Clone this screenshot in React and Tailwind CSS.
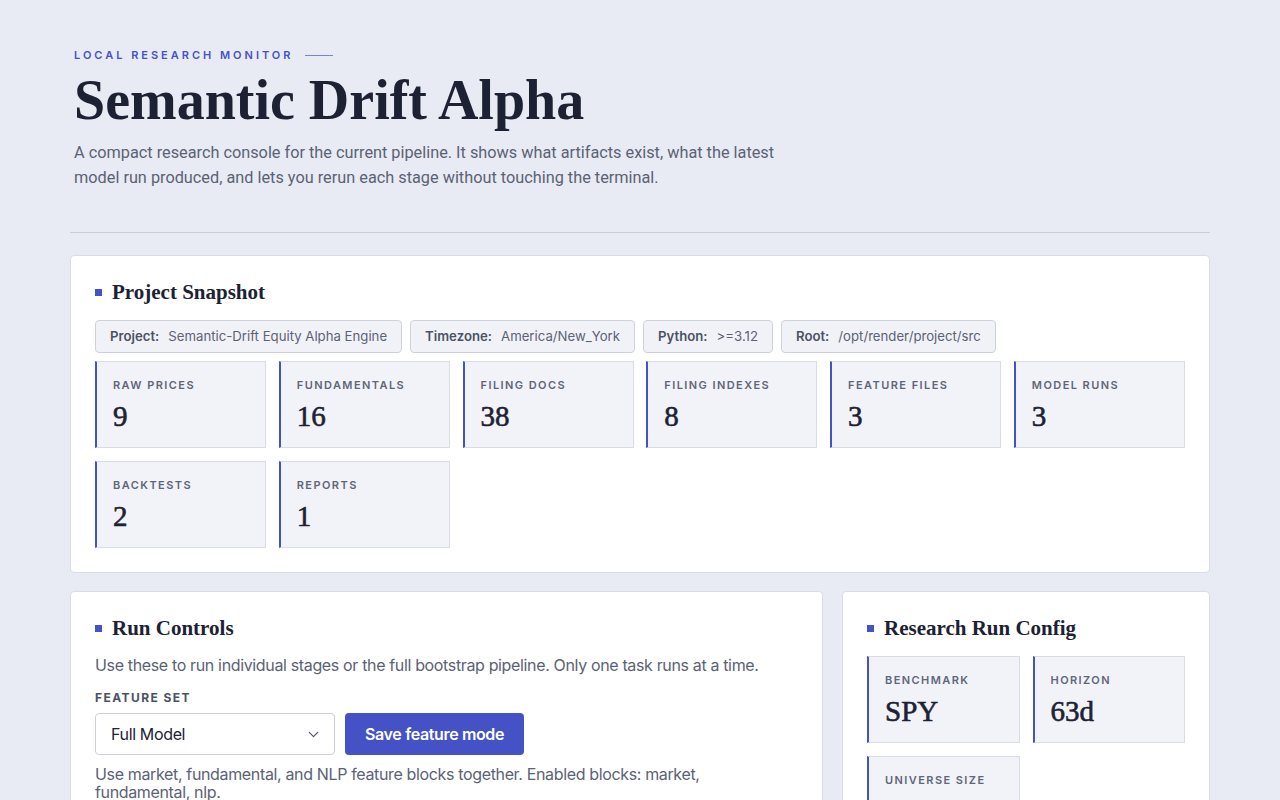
import React from 'react'
import { ChevronDown } from 'lucide-react'

const serif = "font-['Liberation_Serif',Georgia,serif]"

const facts = [
  { k: 'Project', v: 'Semantic-Drift Equity Alpha Engine' },
  { k: 'Timezone', v: 'America/New_York' },
  { k: 'Python', v: '>=3.12' },
  { k: 'Root', v: '/opt/render/project/src' },
]

const counts = [
  { label: 'Raw Prices', value: '9' },
  { label: 'Fundamentals', value: '16' },
  { label: 'Filing Docs', value: '38' },
  { label: 'Filing Indexes', value: '8' },
  { label: 'Feature Files', value: '3' },
  { label: 'Model Runs', value: '3' },
  { label: 'Backtests', value: '2' },
  { label: 'Reports', value: '1' },
]

const config = [
  { label: 'Benchmark', value: 'SPY' },
  { label: 'Horizon', value: '63d' },
  { label: 'Universe Size', value: '50' },
]

const SectionTitle = ({ children }) => (
  <h2 className={`flex items-center gap-[10px] text-[21px] leading-6 font-bold text-[#1c2233] ${serif}`}>
    <span className="w-[7px] h-[7px] bg-[#4552c6]" />
    {children}
  </h2>
)

const Stat = ({ label, value }) => (
  <div className="h-[87px] bg-[#f2f3f8] border border-[#d9dce5] border-l-2 border-l-[#4552c6] pl-4 pt-[15px]">
    <div className="text-[11px] leading-4 font-semibold uppercase tracking-[0.13em] text-[#5f6678]">{label}</div>
    <div className={`mt-[5px] text-[29px] leading-9 text-[#1c2233] [-webkit-text-stroke:0.6px_#1c2233] ${serif}`}>{value}</div>
  </div>
)

const App = () => {
  return (
    <div className="min-h-screen bg-[#e8ebf3] font-['Inter','Liberation_Sans',sans-serif]">
      <div className="max-w-[1140px] mx-auto pt-[47px] pb-16">
        <header className="px-1 pb-[42px] border-b border-[#c8ccd6]">
          <div className="flex items-center gap-3 text-[11px] leading-4 font-semibold tracking-[0.272em] uppercase text-[#4552c6]">
            LOCAL RESEARCH MONITOR
            <span className="w-7 h-px bg-[#7a84d6]" />
          </div>
          <h1 className={`mt-[5px] text-[56px] leading-[64px] font-bold text-[#1c2233] ${serif}`}>Semantic Drift Alpha</h1>
          <p className="mt-2 max-w-[730px] text-[16.3px] leading-[25px] text-[#5b6275] font-['Roboto',sans-serif]">
            A compact research console for the current pipeline. It shows what artifacts exist, what the latest
            model run produced, and lets you rerun each stage without touching the terminal.
          </p>
        </header>

        <section className="mt-[22px] bg-white border border-[#d9dce5] rounded-sm p-6">
          <SectionTitle>Project Snapshot</SectionTitle>
          <div className="mt-4 flex flex-wrap gap-2">
            {facts.map((f) => (
              <div key={f.k} className="h-[33px] flex items-center px-[14px] bg-[#f1f2f7] border border-[#cdd1da] rounded-sm text-[13.2px]">
                <span className="font-semibold text-[#4b5263]">{f.k}:</span>
                <span className="ml-[9px] text-[#5b6275]">{f.v}</span>
              </div>
            ))}
          </div>
          <div className="mt-2 grid grid-cols-6 gap-x-[12.6px] gap-y-[13px]">
            {counts.map((c) => (
              <Stat key={c.label} label={c.label} value={c.value} />
            ))}
          </div>
        </section>

        <div className="mt-[18px] grid grid-cols-[753px_1fr] gap-[19px] items-start">
          <section className="bg-white border border-[#d9dce5] rounded-sm p-6">
            <SectionTitle>Run Controls</SectionTitle>
            <p className="mt-[13px] text-[16px] leading-6 tracking-[-0.022em] text-[#5b6275]">
              Use these to run individual stages or the full bootstrap pipeline. Only one task runs at a time.
            </p>
            <label className="mt-[13px] block text-[12px] leading-4 font-bold uppercase tracking-[0.12em] text-[#4b5263]">Feature Set</label>
            <div className="mt-[7px] flex gap-[10px]">
              <button type="button" className="w-[240px] h-[42px] flex items-center justify-between pl-[15px] pr-3 bg-white border border-[#cdd1da] rounded-sm text-[16px] tracking-[-0.022em] text-[#1c2233]">
                Full Model
                <ChevronDown size={17} strokeWidth={1.6} className="text-[#4b5263]" />
              </button>
              <button type="button" className="h-[42px] px-5 bg-[#4552c6] rounded-sm text-white text-[16px] tracking-[-0.022em] font-semibold">
                Save feature mode
              </button>
            </div>
            <p className="mt-[10px] text-[16px] leading-[18px] tracking-[-0.022em] text-[#5b6275]">
              Use market, fundamental, and NLP feature blocks together. Enabled blocks: market, fundamental, nlp.
            </p>
            <div className="h-40" />
          </section>

          <section className="bg-white border border-[#d9dce5] rounded-sm p-6">
            <SectionTitle>Research Run Config</SectionTitle>
            <div className="mt-4 grid grid-cols-2 gap-x-[13px] gap-y-[13px]">
              {config.map((c) => (
                <Stat key={c.label} label={c.label} value={c.value} />
              ))}
            </div>
          </section>
        </div>
      </div>
    </div>
  )
}

export default App
